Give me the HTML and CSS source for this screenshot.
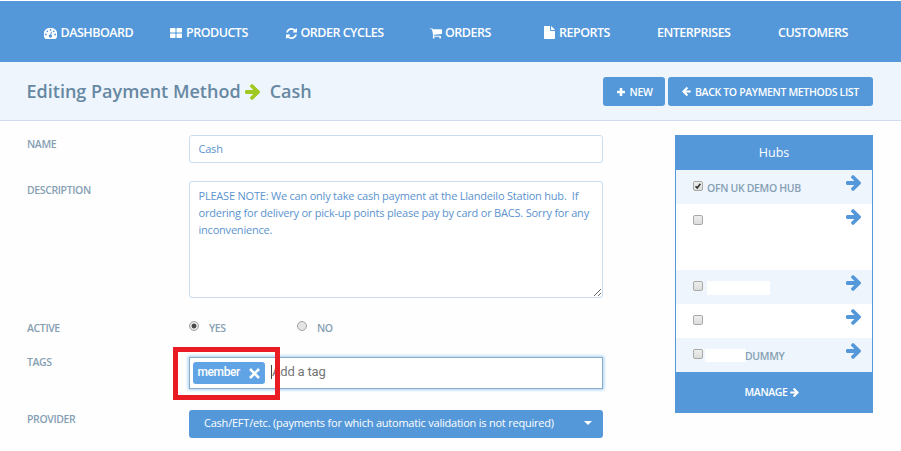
FILE: index.html
```html
<!DOCTYPE html>
<html lang="en">
<head>
<meta charset="utf-8">
<title>Editing Payment Method</title>
<link rel="stylesheet" href="styles.css">
</head>
<body>
<svg class="sprite" aria-hidden="true">
  <symbol id="arrow" viewBox="128 181 1472 1558"><path d="M1600 960q0 54-37 91l-651 651q-39 37-91 37-51 0-90-37l-75-75q-38-38-38-91t38-91l293-293h-704q-52 0-84.5-37.5t-32.5-90.5v-128q0-53 32.5-90.5t84.5-37.5h704l-293-294q-38-36-38-90t38-90l75-75q38-38 90-38 53 0 91 38l651 651q37 35 37 90z"/></symbol>
  <symbol id="refresh" viewBox="128 128 1536 1536"><path d="M1639 1056q0 5-1 7-64 268-268 434.500t-478 166.500q-146 0-282.500-55t-243.500-157l-129 129q-19 19-45 19t-45-19-19-45v-448q0-26 19-45t45-19h448q26 0 45 19t19 45-19 45l-137 137q71 66 161 102t187 36q134 0 250-65t186-179q11-17 53-117 8-23 30-23h192q13 0 22.500 9.500t9.500 22.500zm25-800v448q0 26-19 45t-45 19h-448q-26 0-45-19t-19-45 19-45l138-138q-148-137-349-137-134 0-250 65t-186 179q-11 17-53 117-8 23-30 23h-199q-13 0-22.500-9.500t-9.500-22.500v-7q65-268 270-434.500t480-166.500q146 0 284 55.500t245 156.500l130-129q19-19 45-19t45 19 19 45z"/></symbol>
  <symbol id="cart" viewBox="64 256 1664 1408"><path d="M704 1536q0 52-38 90t-90 38-90-38-38-90 38-90 90-38 90 38 38 90zm896 0q0 52-38 90t-90 38-90-38-38-90 38-90 90-38 90 38 38 90zm128-1088v512q0 24-16.500 42.500t-40.500 21.500l-1044 122q13 60 13 70 0 16-24 64h920q26 0 45 19t19 45-19 45-45 19h-1024q-26 0-45-19t-19-45q0-11 8-31.500t16-36 21.500-40 15.500-29.500l-177-823h-204q-26 0-45-19t-19-45 19-45 45-19h256q16 0 28.500 6.500t19.500 15.500 13 24.500 8 26 5.500 29.500 4.500 26h1201q26 0 45 19t19 45z"/></symbol>
  <symbol id="times" viewBox="0 0 11 11"><path d="M1 1L10 10M10 1L1 10" fill="none" stroke="currentColor" stroke-width="2.600"/></symbol>
  <symbol id="gauge" viewBox="0 0 13 11"><path fill-rule="evenodd" d="M6.500 0A6.500 6.500 0 0 0 1 10.600Q1.200 11 1.600 11H11.400Q11.800 11 12 10.600A6.500 6.500 0 0 0 6.500 0ZM1 6.500a.9.9 0 1 1 1.800 0a.9.9 0 1 1-1.800 0ZM2.400 3.300a.9.9 0 1 1 1.800 0a.9.900 0 1 1-1.800 0ZM5.600 1.900a.9.9 0 1 1 1.800 0a.9.9 0 1 1-1.800 0ZM8.800 3.300a.9.9 0 1 1 1.800 0a.9.9 0 1 1-1.800 0ZM10.200 6.500a.9.900 0 1 1 1.800 0a.9.900 0 1 1-1.800 0ZM7 3.600L7.900 3.900L7.200 6.800A1.500 1.500 0 1 1 6.300 6.600Z"/></symbol>
  <symbol id="grid" viewBox="0 0 12 10"><rect width="5.500" height="4.600" rx=".7"/><rect x="6.500" width="5.500" height="4.600" rx=".7"/><rect y="5.400" width="5.500" height="4.600" rx=".7"/><rect x="6.500" y="5.400" width="5.500" height="4.600" rx=".7"/></symbol>
  <symbol id="file" viewBox="0 0 11 13"><path d="M.7 0H6V4.300Q6 5 6.700 5H11V12.300Q11 13 10.300 13H.7Q0 13 0 12.300V.7Q0 0 .7 0ZM7 .1Q7.400.2 7.700.5L10.500 3.300Q10.800 3.600 10.900 4H7Z"/></symbol>
  <symbol id="plus" viewBox="0 0 8 8"><path d="M3.300 0h1.400q.6 0 .6.600v2.100h2.100q.6 0 .6.600v1.400q0 .6-.6.600H5.300v2.100q0 .6-.6.600H3.300q-.6 0-.6-.6V5.300H.6Q0 5.300 0 4.700V3.300q0-.6.6-.6h2.100V.6q0-.6.6-.6Z"/></symbol>
</svg>

<nav class="nav">
  <a class="dashboard"><svg><use href="#gauge"/></svg><span>DASHBOARD</span></a>
  <a class="products"><svg><use href="#grid"/></svg><span>PRODUCTS</span></a>
  <a class="cycles"><svg><use href="#refresh"/></svg><span>ORDER CYCLES</span></a>
  <a class="orders"><svg><use href="#cart"/></svg><span>ORDERS</span></a>
  <a class="reports"><svg><use href="#file"/></svg><span>REPORTS</span></a>
  <a class="enterprises"><span>ENTERPRISES</span></a>
  <a class="customers"><span>CUSTOMERS</span></a>
</nav>

<header class="title-bar">
  <h1><span>Editing Payment Method</span><svg><use href="#arrow"/></svg><span>Cash</span></h1>
  <div class="actions">
    <a class="button new"><svg><use href="#plus"/></svg><span>NEW</span></a>
    <a class="button back"><svg><use href="#arrow"/></svg><span>BACK TO PAYMENT METHODS LIST</span></a>
  </div>
</header>

<main class="content">
  <form class="form">
    <div class="row name"><label>NAME</label><input class="field" type="text" value="Cash"></div>
    <div class="row description"><label>DESCRIPTION</label><textarea class="field">PLEASE NOTE: We can only take cash payment at the Llandeilo Station hub.  If ordering for delivery or pick-up points please pay by card or BACS. Sorry for any inconvenience.</textarea></div>
    <div class="row active"><label>ACTIVE</label>
      <div class="radios"><i class="radio on"></i><span class="yes">YES</span><i class="radio"></i><span>NO</span></div>
    </div>
    <div class="row tags"><label>TAGS</label>
      <div class="tag-input"><span class="tag"><span>member</span><svg><use href="#times"/></svg></span><i class="caret"></i><span class="placeholder">Add a tag</span><i class="highlight"></i></div>
    </div>
    <div class="row provider"><label>PROVIDER</label>
      <div class="select"><span>Cash/EFT/etc. (payments for which automatic validation is not required)</span><i></i></div>
    </div>
  </form>

  <aside class="hubs">
    <h2>Hubs</h2>
    <div class="hub"><i class="check"><svg viewBox="0 0 10 10"><path d="M2 5.200L4 7.500L8 2.200"/></svg></i><span class="hub-name">OFN UK DEMO HUB</span><svg class="go"><use href="#arrow"/></svg></div>
    <div class="hub tall"><i class="check"></i><svg class="go"><use href="#arrow"/></svg></div>
    <div class="hub"><i class="check"></i><i class="blank wide"></i><svg class="go"><use href="#arrow"/></svg></div>
    <div class="hub"><i class="check"></i><svg class="go"><use href="#arrow"/></svg></div>
    <div class="hub"><i class="check"></i><i class="blank"></i><span class="hub-name dummy">DUMMY</span><svg class="go"><use href="#arrow"/></svg></div>
    <a class="manage"><span>MANAGE</span><svg><use href="#arrow"/></svg></a>
  </aside>
</main>
</body>
</html>
```
FILE: styles.css
```css
* { box-sizing: border-box; }
body {
  margin: 0;
  padding-top: 1px;
  width: 901px;
  height: 451px;
  overflow: hidden;
  background: #fefefe;
  font-family: "Open Sans", sans-serif;
  color: #5498da;
}
svg { display: block; flex: none; fill: currentColor; }
.sprite { position: absolute; width: 0; height: 0; }
span { white-space: nowrap; }

.nav {
  display: flex;
  height: 61px;
  padding-top: 1px;
  background: #5498da;
  color: #fff;
  font-size: 12.500px;
  font-weight: 600;
  letter-spacing: -.5px;
}
.nav a { display: flex; align-items: center; flex: none; }
.nav svg { position: relative; top: 1px; }
.dashboard { width: 126px; margin-left: 44px; }
.dashboard svg { width: 13px; height: 11px; margin-right: 3.500px; }
.products { width: 116px; }
.products svg { width: 12px; height: 10px; margin-right: 4px; }
.cycles { width: 144px; }
.cycles svg { width: 11px; height: 11px; margin-right: 3.500px; }
.orders { width: 114px; }
.orders svg { width: 12px; height: 11px; margin-right: 3px; }
.reports { width: 113px; }
.reports svg { width: 11px; height: 13px; margin-right: 4px; top: 0; }
.enterprises { width: 121px; }

.title-bar {
  display: flex;
  justify-content: space-between;
  align-items: center;
  height: 59px;
  padding: 0 28px 0 26.500px;
  background: #eef5fd;
  border-bottom: 1px solid #cfdcf0;
}
h1 { display: flex; align-items: center; margin: 0; font-size: 18px; font-weight: 600; color: #6788a2; }
h1 svg { width: 15px; height: 16px; margin: 2px 9.500px 0 4.500px; color: #9fc820; }
.actions { display: flex; gap: 3px; padding-top: 1px; }
.button {
  display: flex;
  align-items: center;
  height: 29px;
  padding-left: 14px;
  border-radius: 3px;
  background: #5498da;
  color: #fff;
  font-size: 10.500px;
  font-weight: 600;
  letter-spacing: -.34px;
}
.new { width: 62px; }
.new svg { width: 8px; height: 8px; margin-right: 4.500px; }
.back { width: 205px; }
.back svg { width: 9px; height: 9px; margin-right: 4px; transform: scaleX(-1); }

.content { display: flex; justify-content: space-between; align-items: flex-start; padding: 14px 28px 0 27px; }
.row { display: grid; grid-template-columns: 162px 414px; align-items: start; }
.row label { font-size: 10.500px; line-height: 14px; font-weight: 600; letter-spacing: -.38px; color: #86a0b3; }
.name { height: 46px; }
.description { height: 136px; }
.active { height: 40px; }
.tags { height: 53px; }
.name label, .description label { padding-top: 2px; }
.active label { padding-top: 4px; }
.tags label { margin-top: -2px; }
.provider label { padding-top: 2px; }
.field {
  display: block;
  width: 414px;
  margin: 0;
  padding: 0 8px 2px 8.500px;
  border: 1px solid #cbdcee;
  border-radius: 3px;
  background: #fff;
  color: #5b93cf;
  font: 11px/17px "Open Sans", sans-serif;
  letter-spacing: -.21px;
}
input.field { height: 28px; }
textarea.field { height: 117px; padding-top: 5px; resize: vertical; overflow: hidden; }

.radios { display: flex; font-size: 10.500px; line-height: 14px; font-weight: 600; letter-spacing: -.35px; color: #86a0b3; padding-top: 4px; }
.radio {
  width: 10px;
  height: 10px;
  margin-right: 10px;
  border: 1px solid #a2a2a2;
  border-radius: 50%;
  background: #e4e4e4;
}
.radio.on { background: radial-gradient(circle, #484848 0 2px, #e4e4e4 2.800px); }
.yes { width: 88px; }

.tag-input {
  position: relative;
  display: flex;
  align-items: center;
  height: 32px;
  padding-left: 3px;
  border: 1px solid #8cabc9;
  background: #fff;
  box-shadow: 0 0 3px 1px #a5d0f3;
  font-family: Roboto, sans-serif;
}
.tag {
  display: flex;
  align-items: center;
  width: 72px;
  height: 22px;
  margin-top: -1px;
  padding-left: 4.500px;
  border-radius: 3px;
  background: #60a4e6;
  color: #fff;
  font-size: 12px;
  font-weight: 500;
}
.tag > span { width: 42.500px; margin-top: -1px; letter-spacing: -.4px; }
.tag svg { width: 11px; height: 11px; margin: 2px 0 0 9px; }
.caret { width: 1px; height: 14px; margin: -3px 0 0 6px; background: #444; }
.placeholder { margin-top: -3px; color: #757575; font-size: 13px; letter-spacing: -.2px; }
.highlight { position: absolute; left: -17px; top: -11px; width: 107px; height: 53px; border: 5px solid #e91c24; }

.select {
  display: flex;
  justify-content: space-between;
  align-items: center;
  height: 28px;
  padding: 0 11px 3px 15px;
  border-radius: 3px;
  background: #5498da;
  color: #fff;
  font-size: 11px;
  letter-spacing: -.22px;
}
.select i { border: solid transparent; border-width: 4px 4px 0; border-top-color: #fff; }

.hubs { width: 198px; height: 278px; border: 1px solid #5498da; background: #fff; }
.hubs h2 { margin: 0; height: 34px; background: #5498da; color: #fff; font-size: 12.500px; font-weight: 400; line-height: 34px; text-align: center; }
.hub { display: flex; align-items: flex-start; height: 34px; padding: 0 11px 0 17px; }
.hub.tall { height: 66px; }
.hub:nth-of-type(odd) { background: #eef5fd; }
.check { flex: none; width: 10px; height: 10px; margin-top: 11px; border: 1px solid #a9a9a9; border-radius: 2px; background: linear-gradient(#eee, #dcdcdc); }
.check svg { width: 8px; height: 8px; fill: none; stroke: #333; stroke-width: 2; }
.hub-name { margin: 11px 0 0 4px; font-size: 10.500px; line-height: 14px; font-weight: 600; letter-spacing: -.33px; color: #86a0b3; }
.hub-name.dummy { margin-left: -1px; }
.blank { width: 41px; height: 13px; margin: 11px 0 0 2px; background: #fff; }
.blank.wide { width: 63px; height: 14px; margin-left: 4px; }
.go { width: 15px; height: 16px; margin: 5px 0 0 auto; }
.manage { display: flex; align-items: center; justify-content: center; gap: 3px; height: 40px; padding-right: 4px; background: #5498da; color: #fff; font-size: 10.500px; font-weight: 600; letter-spacing: -.4px; }
.manage svg { width: 9px; height: 9px; }
```
